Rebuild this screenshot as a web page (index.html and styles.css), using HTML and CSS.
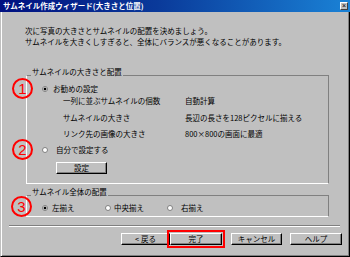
FILE: index.html
```
<!DOCTYPE html>
<html lang="ja">
<head>
    <meta charset="UTF-8">
    <title>サムネイル作成ウィザード</title>
    <link rel="stylesheet" href="styles.css">
</head>
<body>
    <div class="window">
        <div class="titlebar">
            <span class="title">サムネイル作成ウィザード(大きさと位置)</span>
            <span class="close">×</span>
        </div>

        <div class="frame">
            <div class="intro">
                <div class="intro-line">次に写真の大きさとサムネイルの配置を決めましょう。</div>
                <div class="intro-line">サムネイルを大きくしすぎると、全体にバランスが悪くなることがあります。</div>
            </div>

            <div class="group group-size">
                <div class="group-title">サムネイルの大きさと配置</div>
                <div class="option option-first"><span class="radio checked"></span>お勧めの設定</div>
                <div class="settings">
                    <span>一列に並ぶサムネイルの個数</span><span>自動計算</span>
                    <span>サムネイルの大きさ</span><span>長辺の長さを128ピクセルに揃える</span>
                    <span>リンク先の画像の大きさ</span><span>800×800の画面に最適</span>
                </div>
                <div class="option option-second"><span class="radio"></span>自分で設定する</div>
                <button class="btn btn-setting">設定</button>

                <!-- 注釈の丸数字 -->
                <span class="mark mark-1">1</span>
                <span class="mark mark-2">2</span>
            </div>

            <div class="group group-align">
                <div class="group-title">サムネイル全体の配置</div>
                <div class="choices">
                    <div class="choice choice-left"><span class="radio checked"></span>左揃え</div>
                    <div class="choice choice-center"><span class="radio"></span>中央揃え</div>
                    <div class="choice choice-right"><span class="radio"></span>右揃え</div>
                </div>
                <span class="mark mark-3">3</span>
            </div>

            <div class="separator"></div>

            <div class="buttons">
                <button class="btn btn-back">&lt; 戻る</button>
                <button class="btn btn-finish">完了</button>
                <button class="btn btn-cancel">キャンセル</button>
                <button class="btn btn-help">ヘルプ</button>
            </div>
        </div>
    </div>
</body>
</html>
```

FILE: styles.css
```
body {
    margin: 0;
    font-family: "Noto Sans CJK JP", "Liberation Sans", sans-serif;
    font-size: 7.5px;
    color: #000;
    background-color: #c0c0c0;
}
.window {
    width: 350px;
    height: 257px;
    display: flex;
    flex-direction: column;
    background-color: #c0c0c0;
}
.titlebar {
    height: 12px;
    flex-shrink: 0;
    display: flex;
    align-items: center;
    justify-content: space-between;
    padding: 0 2px 0 3px;
    background: linear-gradient(to right, #001080 0%, #0a3a9a 45%, #1a82d6 100%);
    color: #fff;
}
.title {
    font-weight: bold;
    font-size: 7.5px;
    line-height: 12px;
}
.close {
    width: 8px;
    height: 8px;
    box-sizing: border-box;
    background-color: #c0c0c0;
    border: 1px solid;
    border-color: #fff #404040 #404040 #fff;
    color: #000;
    font-family: "Liberation Sans", sans-serif;
    font-size: 7px;
    line-height: 6px;
    text-align: center;
}
.frame {
    flex: 1;
    border-style: solid;
    border-width: 0 1px 1px 1px;
    border-color: #c0c0c0 #000 #000 #c0c0c0;
    box-shadow: inset 1px 0 #fff, inset -1px -1px #808080;
}
.intro {
    margin: 13px 0 0 24px;
}
.intro-line {
    line-height: 11px;
    white-space: nowrap;
}

/* グループ枠 */
.group {
    position: relative;
    margin-left: 25px;
    width: 303px;
    box-sizing: border-box;
    border: 1px solid;
    border-color: #808080 #808080 #fff #fff;
}
.group-size {
    margin-top: 28px;
    padding-bottom: 9px;
}
.group-align {
    margin-top: 11px;
    padding-bottom: 4px;
}
.group-title {
    display: table;
    height: 9px;
    line-height: 9px;
    margin: -9px 0 0 4px;
    padding: 0 1px;
    background-color: #c0c0c0;
}
.radio {
    display: inline-block;
    width: 6px;
    height: 6px;
    box-sizing: border-box;
    border-radius: 50%;
    background-color: #fff;
    border: 1px solid #808080;
    flex-shrink: 0;
}
.radio.checked {
    background: radial-gradient(circle, #000 1.3px, #fff 1.7px);
}
.option {
    display: flex;
    align-items: center;
    height: 8px;
    line-height: 8px;
    padding-left: 15px;
}
.option-first {
    margin-top: 9px;
    gap: 5px;
}
.option-second {
    margin-top: 8px;
    gap: 8px;
}
.settings {
    display: grid;
    grid-template-columns: 122px auto;
    row-gap: 8.5px;
    margin-top: 4px;
    padding-left: 36px;
    line-height: 8px;
    white-space: nowrap;
}
.choices {
    display: flex;
    height: 8px;
    line-height: 8px;
    margin-top: 8px;
    padding-left: 15px;
}
.choice {
    display: flex;
    align-items: center;
    gap: 4px;
}
.choice-left {
    width: 63px;
}
.choice-center {
    width: 62px;
    gap: 3px;
}
.choice-right {
    gap: 8px;
}

/* 丸数字 */
.mark {
    position: absolute;
    left: -15px;
    width: 17px;
    height: 17px;
    border: 2px solid #f00;
    border-radius: 50%;
    color: #f00;
    font-family: "Liberation Sans", sans-serif;
    font-size: 15px;
    line-height: 17px;
    text-align: center;
}
.mark-1 {
    top: 2px;
}
.mark-2 {
    top: 63px;
}
.mark-3 {
    left: -16px;
    top: 0;
}

/* ボタン */
.btn {
    display: block;
    height: 12px;
    padding: 0;
    box-sizing: border-box;
    background-color: #c0c0c0;
    border: 1px solid;
    border-color: #fff #000 #000 #fff;
    box-shadow: inset -1px -1px #808080;
    font-family: inherit;
    font-size: 7.5px;
    line-height: 10px;
    color: #000;
    text-align: center;
}
.btn-setting {
    width: 51px;
    margin: 8px 0 0 29px;
}
.separator {
    margin: 8px 0 0 8px;
    width: 331px;
    height: 0;
    border-top: 1px solid #808080;
    border-bottom: 1px solid #fff;
}
.buttons {
    display: flex;
    margin-top: 6px;
    padding-left: 120px;
}
.btn-back {
    width: 49px;
}
.btn-finish {
    width: 52px;
    outline: 2px solid #f00;
    outline-offset: 1px;
}
.btn-cancel {
    width: 51px;
    margin-left: 9px;
}
.btn-help {
    width: 52px;
    margin-left: 8px;
}
```
